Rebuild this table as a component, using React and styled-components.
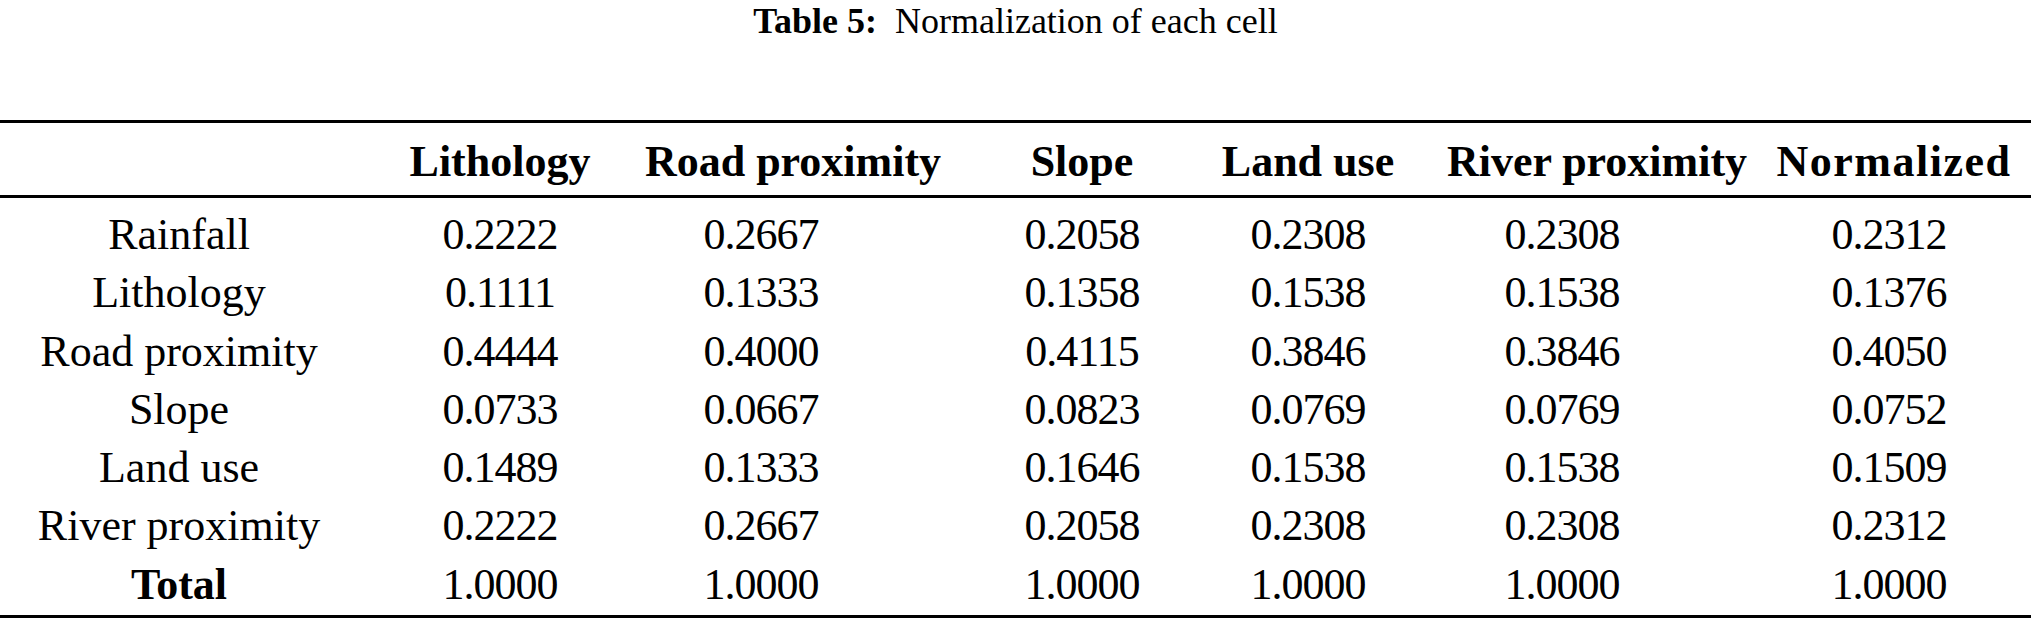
import React from "react";
import styled, { createGlobalStyle, css } from "styled-components";

const GlobalStyle = createGlobalStyle`
    body {
        margin: 0;
        background: #ffffff;
        color: #000000;
        font-family: "Liberation Serif", "Times New Roman", serif;
    }
`;

const Page = styled.div`
    width: 2031px;
    height: 621px;
    overflow: hidden;
`;

const Caption = styled.div`
    text-align: center;
    font-size: 36px;
    line-height: 40px;
    padding-top: 1px;
    white-space: pre;
`;

const CaptionLabel = styled.b`
    font-weight: bold;
`;

const Table = styled.div`
    margin-top: 79px;
    font-size: 44px;
`;

// column tracks, centred on the header labels
const columnGrid = css`
    display: grid;
    grid-template-columns: 358px 284px 302px 276px 176px 402px 192px;
`;

const HeadRow = styled.div`
    ${columnGrid};
    border-top: 3px solid #000;
    border-bottom: 3px solid #000;
    padding-top: 6px;
    line-height: 66px;
    font-weight: bold;
`;

const Body = styled.div`
    padding-top: 8px;
    padding-bottom: 1px;
    border-bottom: 3px solid #000;
`;

const Row = styled.div`
    ${columnGrid};
    line-height: 58.3px;
`;

const Cell = styled.div`
    display: flex;
    justify-content: center;
    white-space: nowrap;
    min-width: 0;
    padding-left: ${(p) => Math.max(0, 2 * (p.$shift || 0))}px;
    padding-right: ${(p) => Math.max(0, -2 * (p.$shift || 0))}px;
    font-weight: ${(p) => (p.$bold ? "bold" : "inherit")};
    letter-spacing: ${(p) => p.$spread || 0}px;
`;

const Value = styled(Cell)`
    letter-spacing: -1px;
`;

const headers = [
    { label: "Lithology" },
    { label: "Road proximity" },
    { label: "Slope" },
    { label: "Land use" },
    { label: "River proximity" },
    { label: "Normalized", spread: 1.5 },
];

// value offset from the header centre, per column
const shifts = [0, -32, 0, 0, -35, -5];

const rows = [
    ["Rainfall", "0.2222", "0.2667", "0.2058", "0.2308", "0.2308", "0.2312"],
    ["Lithology", "0.1111", "0.1333", "0.1358", "0.1538", "0.1538", "0.1376"],
    ["Road proximity", "0.4444", "0.4000", "0.4115", "0.3846", "0.3846", "0.4050"],
    ["Slope", "0.0733", "0.0667", "0.0823", "0.0769", "0.0769", "0.0752"],
    ["Land use", "0.1489", "0.1333", "0.1646", "0.1538", "0.1538", "0.1509"],
    ["River proximity", "0.2222", "0.2667", "0.2058", "0.2308", "0.2308", "0.2312"],
    ["Total", "1.0000", "1.0000", "1.0000", "1.0000", "1.0000", "1.0000"],
];

export default function App() {
    return (
        <Page>
            <GlobalStyle />
            <Caption>
                <CaptionLabel>Table 5:</CaptionLabel>
                {"  Normalization of each cell"}
            </Caption>
            <Table>
                <HeadRow>
                    <Cell />
                    {headers.map((h) => (
                        <Cell key={h.label} $spread={h.spread}>
                            {h.label}
                        </Cell>
                    ))}
                </HeadRow>
                <Body>
                    {rows.map(([label, ...values]) => (
                        <Row key={label}>
                            <Cell $bold={label === "Total"}>{label}</Cell>
                            {values.map((v, i) => (
                                <Value key={i} $shift={shifts[i]}>
                                    {v}
                                </Value>
                            ))}
                        </Row>
                    ))}
                </Body>
            </Table>
        </Page>
    );
}
